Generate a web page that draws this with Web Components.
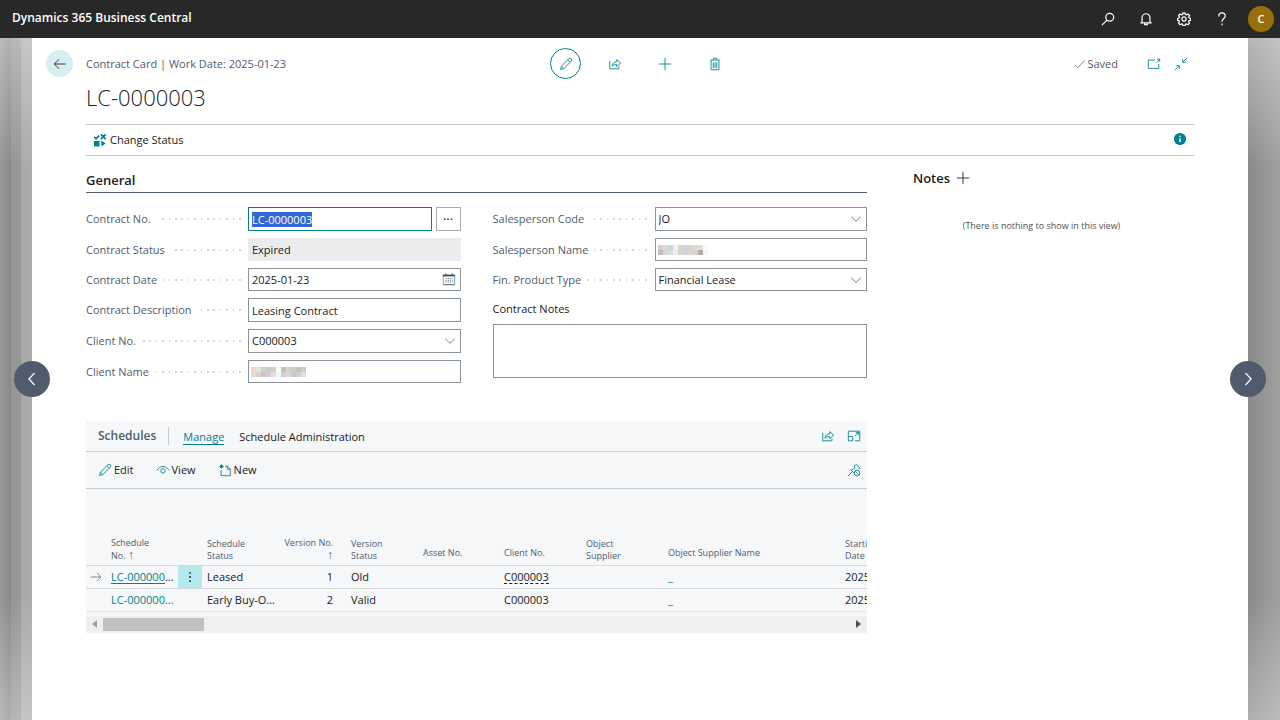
<!DOCTYPE html>
<html lang="en">
<head>
<meta charset="utf-8">
<meta name="viewport" content="width=device-width, initial-scale=1">
<title>LC-0000003 - Dynamics 365 Business Central</title>
<style>
html, body { margin: 0; }
body {
  --teal: #00828a; --ink: #212121; --muted: #505c6d; --line: #c8cbd0; --edge: #8b929e; --pane: #f5f7f9;
  font: 11px/16px "Open Sans", "Noto Sans", sans-serif; color: var(--ink);
}
</style>
</head>
<body>
<bc-app></bc-app>
<script>
const BASE = `
  *, *::before, *::after { box-sizing: border-box; }
  button, input, select, textarea { font: inherit; color: inherit; margin: 0; border-radius: 0; outline: 0; }
  button { background: none; border: 0; padding: 0; display: inline-flex; align-items: center; cursor: pointer; }
  h1, h2, p { margin: 0; }
  a { color: inherit; text-decoration: none; }
`;
function define(name, html, setup) {
  const template = document.createElement('template');
  template.innerHTML = html;
  customElements.define(name, class extends HTMLElement {
    connectedCallback() {
      if (this.shadowRoot) return;
      const root = this.attachShadow({ mode: 'open' });
      const base = document.createElement('style');
      base.textContent = BASE;
      root.append(base, template.content.cloneNode(true));
      if (setup) setup.call(this, root);
    }
  });
}

/* 16 x 16 line icons */
const ICONS = {
  search: '<circle cx="10" cy="6" r="4.5"/><path d="M7 9.300 1 15"/>',
  bell: '<path d="M3.500 12.500V6.500a4.500 4.500 0 0 1 9 0v6M1.500 12.500h13M6.500 13v1.500h3V13"/>',
  gear: '<circle cx="8" cy="8" r="2.400"/><path d="M6.800 1h2.400l.4 1.800 1.200.5 1.700-1 1.900 1.900-1 1.700.5 1 1.600.3v2.400l-1.800.4-.5 1.200 1 1.600-1.700 1.700-1.700-1-1.200.5-.4 1.600H6.800l-.4-1.600-1.200-.5-1.700 1-1.700-1.700 1-1.600-.5-1.200-1.600-.4V7.200l1.600-.3.500-1-1-1.700 1.700-1.900 1.700 1 1.200-.5z"/>',
  help: '<path d="M4.300 5V4.600a3.700 3.700 0 0 1 7.400 0C11.700 7.500 8 7.500 8 11M8 13v2"/>',
  back: '<path d="M1.500 8h13M7 2.500 1.500 8 7 13.500"/>',
  pencil: '<path d="m1.800 14.200 1-3.800 8.300-8.300a1.900 1.900 0 0 1 2.800 2.800l-8.300 8.300zM10 3.200 12.800 6M2.800 10.400l2.800 2.800"/>',
  share: '<path d="M2 4.500v9h10.500V11M4.500 10.500C5 7 7 5.500 10 5.500V3l4.500 4-4.500 4V8.500C7.500 8.500 6 9 4.500 10.500z"/>',
  plus: '<path d="M8 1v14M1 8h14"/>',
  trash: '<path d="M3.500 4v10.500h9V4M2.500 3.500h11M6 3V1.500h4V3M6 6v6.500M8 6v6.500M10 6v6.500"/>',
  check: '<path d="m1 9 4 4L14.500 3"/>',
  popout: '<path d="M9 3.500H1.500v9.500h12V8M10.500 6.500l4-4M11.500 2.500h3v3"/>',
  collapse: '<path d="m15 1-5 5M10 2.500V6h3.500M1 15l5-5M2.500 10H6v3.500"/>',
  info: '<circle cx="8" cy="8" r="7" fill="currentColor" stroke="none"/><path stroke="#fff" stroke-width="1.600" d="M8 7v4.500M8 4.200v1.500"/>',
  status: '<g fill="currentColor" stroke="none"><path d="M1 9h6.500v6.500H1zM9.500 8.500 14.500 12l-5 3.500z"/></g><path stroke-width="2" d="M1.500 4.500 3.500 6.500 7 3M9 1.500l5.500 5.500M14.500 1.500 9 7"/>',
  left: '<path stroke-width="1.500" d="M11 1 4.500 8l6.500 7"/>',
  right: '<path stroke-width="1.500" d="M5 1l6.500 7L5 15"/>',
  down: '<path d="m1.500 5 6.500 6 6.500-6"/>',
  calendar: '<path stroke="#b08a60" d="M1.500 3.500v11"/><path stroke="#3a4552" stroke-width="2" d="M1 4h14"/><path stroke="#3a4552" d="M4.500 1.500V4M11.500 1.500V4M1.500 14.500h13"/><path stroke="#6e7a87" stroke-dasharray="1.500 1" d="M4 7.500h8.500M4 9.500h8.500M4 11.500h8.500"/><path stroke="#4a97d8" d="M14.500 5v9.500"/>',
  eye: '<path d="M1 8.500c3.500-6 10.500-6 14 0"/><circle cx="8" cy="9" r="2.500"/>',
  newdoc: '<path d="M8 3.500h2.500l3.500 3.300v7.700H3.500V8M10.500 3.500v3.500H14M4 1.500v5M1.500 4h5M2.300 2.300l3.400 3.400M5.700 2.300 2.300 5.700"/>',
  expand: '<path d="M1.500 8V2.500h13v11H9M1.500 8.500h5v5h-5zM9 8l4-4M10 4h3v3"/>',
  unpin: '<path d="m1 15 5-5M4 7.500l4.500 4.500M5 8.200l4-2.500L8.500 3.500 10.500 1.500l4.500 4.500-1.500 1.500"/><circle cx="11.500" cy="11.500" r="3.200"/><path d="m9.500 9.500 4 4"/>',
  arrow: '<path d="M1 8h13.500M9 2.500l5.500 5.500L9 13.500"/>',
  dots: '<g fill="currentColor" stroke="none"><circle cx="8" cy="2.500" r="1.200"/><circle cx="8" cy="8" r="1.200"/><circle cx="8" cy="13.500" r="1.200"/></g>'
};
define('bc-icon', `
  <style>:host { display: inline-flex; flex: none; width: 14px; height: 14px; } svg { width: 100%; height: 100%; display: block; }</style>
  <svg viewBox="0 0 16 16" fill="none" stroke="currentColor" aria-hidden="true"></svg>`,
  function (root) { root.querySelector('svg').innerHTML = ICONS[this.getAttribute('name')] || ''; });

define('bc-topbar', `
  <style>
    :host { display: flex; align-items: center; justify-content: space-between; height: 38px; padding: 0 6px 0 12px; background: #282828; color: #fff; }
    a { font-size: 12px; font-weight: 600; padding-bottom: 3px; }
    nav { display: flex; align-items: center; gap: 24px; }
    bc-icon { width: 14px; height: 14px; stroke-width: 1.4px; }
    .avatar { width: 26px; height: 26px; border-radius: 13px; background: #986f0b; justify-content: center; font-weight: 600; margin-left: -5px; }
  </style>
  <a href="#">Dynamics 365 Business Central</a>
  <nav aria-label="Global">
    <button aria-label="Search"><bc-icon name="search"></bc-icon></button>
    <button aria-label="Notifications"><bc-icon name="bell"></bc-icon></button>
    <button aria-label="Settings"><bc-icon name="gear"></bc-icon></button>
    <button aria-label="Help"><bc-icon name="help"></bc-icon></button>
    <button class="avatar">C</button>
  </nav>`);

define('bc-page-head', `
  <style>
    :host { display: block; }
    .bar { display: grid; grid-template-columns: 1fr auto 1fr; align-items: center; height: 31px; color: var(--teal); }
    .crumb { display: flex; align-items: center; color: var(--muted); margin-left: -40px; gap: 13px; }
    .back { width: 27px; height: 27px; border-radius: 14px; background: #d7eff1; color: var(--ink); justify-content: center; }
    .cmds { display: flex; align-items: center; gap: 36px; padding-right: 8px; }
    .edit { width: 31px; height: 31px; border: 1px solid var(--teal); border-radius: 16px; justify-content: center; margin-right: -9px; }
    .state { display: flex; align-items: center; justify-content: flex-end; gap: 13px; padding-right: 6px; }
    .saved { display: flex; align-items: center; color: var(--muted); margin-right: 16px; gap: 1px; }
    .saved bc-icon { width: 12px; height: 12px; }
    h1 { font-size: 22px; line-height: 30px; font-weight: 300; padding: 3px 0 12px; }
  </style>
  <div class="bar">
    <div class="crumb"><button class="back" aria-label="Back"><bc-icon name="back"></bc-icon></button><span>Contract Card | Work Date: 2025-01-23</span></div>
    <div class="cmds">
      <button class="edit" aria-label="Edit"><bc-icon name="pencil"></bc-icon></button>
      <button aria-label="Share"><bc-icon name="share"></bc-icon></button>
      <button aria-label="New"><bc-icon name="plus"></bc-icon></button>
      <button aria-label="Delete"><bc-icon name="trash"></bc-icon></button>
    </div>
    <div class="state">
      <span class="saved"><bc-icon name="check"></bc-icon>Saved</span>
      <button aria-label="Open in new window"><bc-icon name="popout"></bc-icon></button>
      <button aria-label="Collapse"><bc-icon name="collapse"></bc-icon></button>
    </div>
  </div>
  <h1>LC-0000003</h1>`);

define('bc-action-bar', `
  <style>
    :host { display: flex; align-items: center; justify-content: space-between; height: 32px; border: solid var(--line); border-width: 1px 0; padding: 0 7px; }
    button { gap: 3px; }
    .info { color: var(--teal); padding-bottom: 3px; }
  </style>
  <button><bc-icon name="status" style="color: var(--teal)"></bc-icon>Change Status</button>
  <button class="info" aria-label="Details"><bc-icon name="info"></bc-icon></button>`);

const MOSAICS = {
  client: ['#ead8d2 #e3e6df #cccfcc #c9cdd0 #d2d0cd #fbfcfe #c3bfbd #d3d3d1 #cccdc8 #c5c6c2 #c5cdd7', '#edd9cf #d9d3cf #cac8cb #d0d0d2 #e9ddda #edf6fb #d7cfc9 #d9d7d0 #c7cad0 #cfd1cc #d9e2e8'],
  sales: ['#d5cfd1 #deded7 #cdd3d6 #f0efef #d5d5cf #d0d2d6 #d6d5d0 #dcd9d9 #dfdcdb #f5faff', '#c3babf #dfd5ce #d5e2e5 #e9ebeb #d4d6cf #ced1d8 #d7d5d2 #d4d1d0 #b4a9a7 #f1f8fd']
};
define('bc-field', `
  <style>
    :host { display: grid; grid-template-columns: 162px 1fr; height: 23px; }
    :host([tall]) { height: 24px; }
    :host([wide]) { display: block; height: auto; padding-top: 3px; }
    label { display: flex; align-items: center; color: var(--muted); gap: 6px; padding-right: 7px; white-space: nowrap; }
    label::after { content: ""; flex: 1; height: 2px; background: url("data:image/svg+xml,%3Csvg xmlns='http://www.w3.org/2000/svg' width='32' height='2' fill='%23d3d5d8'%3E%3Cpath d='M4 0h2v2H4zM11 0h1v2h-1zM17 0h2v2h-2zM24 0h1v2h-1zM30 0h2v2h-2z'/%3E%3C/svg%3E") right top repeat-x; }
    :host([wide]) label { color: var(--ink); line-height: 16px; padding-bottom: 7px; }
    :host([wide]) label::after { content: none; }
    .box { display: flex; position: relative; min-width: 0; gap: 4px; }
    input, select, textarea { flex: 1; min-width: 0; width: 100%; height: 100%; background: #fff; border: 1px solid var(--edge); padding: 0 3px; appearance: none; }
    textarea { display: block; height: 54px; resize: none; padding: 3px; }
    :host([focused]) input { border-color: var(--teal); }
    input:read-only { background: #ebeced; border-color: #ebeced; }
    ::selection { background: #3367d6; color: #fff; }
    .more { width: 25px; border: 1px solid #a9aeb5; justify-content: center; font-size: 13px; }
    .hint { position: absolute; right: 5px; top: 6px; color: var(--muted); pointer-events: none; width: 12px; height: 12px; }
    .hint[name=calendar] { width: 14px; height: 14px; top: 4px; }
    .mosaic { position: absolute; left: 3px; top: 7px; }
  </style>
  <label for="c"></label><div class="box"></div>`,
  function (root) {
    const kind = this.getAttribute('kind') || 'text', value = this.getAttribute('value') || '';
    root.querySelector('label').textContent = this.getAttribute('label');
    const box = root.querySelector('.box');
    const control = document.createElement(kind === 'select' ? 'select' : kind === 'area' ? 'textarea' : 'input');
    control.id = 'c';
    if (kind === 'select') control.add(new Option(value)); else control.value = value;
    if (kind === 'readonly') control.readOnly = true;
    box.append(control);
    const hint = { select: 'down', date: 'calendar' }[kind];
    if (hint) box.insertAdjacentHTML('beforeend', `<bc-icon class="hint" name="${hint}"></bc-icon>`);
    if (kind === 'lookup') box.insertAdjacentHTML('beforeend', '<button class="more" aria-label="Assist edit">···</button>');
    const mosaic = MOSAICS[this.getAttribute('mosaic')];
    if (mosaic) {
      const cells = mosaic.map((row, y) => row.split(' ').map((c, x) => `<rect x="${x * 5}" y="${y * 5}" width="5" height="5" fill="${c}"/>`).join('')).join('');
      box.insertAdjacentHTML('beforeend', `<svg class="mosaic" width="60" height="10" shape-rendering="crispEdges" aria-hidden="true">${cells}</svg>`);
    }
    if (this.hasAttribute('focused')) { control.focus(); control.select(); }
  });

define('bc-general', `
  <style>
    :host { display: block; }
    h2 { font-size: 13px; line-height: 20px; font-weight: 600; padding-bottom: 2px; border-bottom: 1px solid var(--muted); }
    .cols { display: grid; grid-template-columns: 1fr 1fr; gap: 32px; padding-top: 14px; }
    .col { display: flex; flex-direction: column; gap: 7px; }
  </style>
  <h2>General</h2>
  <div class="cols">
    <div class="col">
      <bc-field tall focused kind="lookup" label="Contract No." value="LC-0000003"></bc-field>
      <bc-field kind="readonly" label="Contract Status" value="Expired"></bc-field>
      <bc-field kind="date" label="Contract Date" value="2025-01-23"></bc-field>
      <bc-field tall label="Contract Description" value="Leasing Contract"></bc-field>
      <bc-field tall kind="select" label="Client No." value="C000003"></bc-field>
      <bc-field label="Client Name" mosaic="client"></bc-field>
    </div>
    <div class="col">
      <bc-field tall kind="select" label="Salesperson Code" value="JO"></bc-field>
      <bc-field label="Salesperson Name" mosaic="sales"></bc-field>
      <bc-field kind="select" label="Fin. Product Type" value="Financial Lease"></bc-field>
      <bc-field wide kind="area" label="Contract Notes"></bc-field>
    </div>
  </div>`);

define('bc-schedules', `
  <style>
    :host { display: block; background: var(--pane); overflow: hidden; }
    .head, .tools { display: flex; align-items: center; border-bottom: 1px solid var(--line); padding: 0 6px 0 12px; }
    .head { height: 31px; }
    .tools { height: 37px; gap: 22px; }
    h2 { font-size: 12px; line-height: 18px; font-weight: 600; color: var(--muted); padding-right: 12px; border-right: 1px solid var(--line); margin-right: 14px; }
    .tab { margin-right: 15px; border-bottom: 1px solid transparent; line-height: 15px; padding-top: 1px; }
    .tab.on { color: var(--teal); border-color: var(--teal); }
    .end { margin-left: auto; display: flex; gap: 12px; color: var(--teal); }
    .tools button { gap: 2px; }
    bc-icon { color: var(--teal); }
    table { table-layout: fixed; border-collapse: collapse; width: 840px; }
    .view { overflow: hidden; padding-bottom: 4px; }
    th { font-size: 9px; line-height: 12px; font-weight: 400; color: var(--muted); text-align: left; vertical-align: bottom; height: 76px; padding: 0 0 3px 5px; }
    th.one { padding-bottom: 6px; }
    th b { font-size: 12px; font-weight: 400; line-height: 11px; }
    td { height: 23px; line-height: 16px; padding: 0 0 0 5px; white-space: nowrap; }
    thead tr, tbody tr { border-bottom: 1px solid #d5d8dc; }
    tbody tr:last-child { border-color: #e4e6e9; }
    .num { text-align: right; padding-right: 13px; }
    td a { color: var(--teal); }
    .on td:nth-child(2) a { text-decoration: underline; text-underline-offset: 2px; }
    td.pick { background: #b2eaed; padding: 0; }
    .pick button { width: 24px; height: 22px; justify-content: center; }
    .pick bc-icon { color: var(--ink); width: 12px; height: 12px; }
    .mark { padding-left: 4px; }
    .mark bc-icon { display: flex; width: 12px; height: 12px; color: #666; }
    .on .client { border-bottom: 1px dashed var(--ink); display: inline-block; line-height: 12px; }
    .scroll { display: flex; align-items: center; justify-content: space-between; height: 17px; padding: 0 6px; background: #f0f0f0; }
    .thumb { width: 101px; height: 13px; background: #c1c1c1; margin: 0 auto 0 6px; }
    .scroll svg { width: 5px; height: 8px; fill: #505050; }
  </style>
  <div class="head">
    <h2>Schedules</h2>
    <a class="tab on" href="#">Manage</a><a class="tab" href="#">Schedule Administration</a>
    <div class="end"><button aria-label="Share"><bc-icon name="share"></bc-icon></button><button aria-label="Expand"><bc-icon name="expand"></bc-icon></button></div>
  </div>
  <div class="tools">
    <button><bc-icon name="pencil"></bc-icon>Edit</button>
    <button><bc-icon name="eye"></bc-icon>View</button>
    <button><bc-icon name="newdoc"></bc-icon>New</button>
    <div class="end"><button aria-label="Unpin"><bc-icon name="unpin"></bc-icon></button></div>
  </div>
  <div class="view">
    <table>
      <colgroup><col style="width:20px"><col style="width:72px"><col style="width:24px"><col style="width:77px"><col style="width:67px"><col style="width:72px"><col style="width:81px"><col style="width:82px"><col style="width:82px"><col style="width:177px"><col></colgroup>
      <thead><tr>
        <th></th><th>Schedule<br>No. <b>↑</b></th><th></th><th>Schedule<br>Status</th><th class="num">Version No.<br><b>↑</b></th><th>Version<br>Status</th>
        <th class="one">Asset No.</th><th class="one">Client No.</th><th>Object<br>Supplier</th><th class="one">Object Supplier Name</th><th>Starting<br>Date</th>
      </tr></thead>
      <tbody>
        <tr class="on"><td class="mark"><bc-icon name="arrow"></bc-icon></td><td><a href="#">LC-000000</a>...</td><td class="pick"><button aria-label="More options"><bc-icon name="dots"></bc-icon></button></td><td>Leased</td><td class="num">1</td><td>Old</td><td></td><td><span class="client">C000003</span></td><td></td><td><a href="#">_</a></td><td>2025-01-23</td></tr>
        <tr><td></td><td><a href="#">LC-000000...</a></td><td></td><td>Early Buy-O...</td><td class="num">2</td><td>Valid</td><td></td><td><span class="client">C000003</span></td><td></td><td><a href="#">_</a></td><td>2025-01-23</td></tr>
      </tbody>
    </table>
  </div>
  <div class="scroll"><svg viewBox="0 0 5 8" style="fill:#a0a0a0"><path d="M5 0v8L0 4z"/></svg><div class="thumb"></div><svg viewBox="0 0 5 8"><path d="M0 0v8l5-4z"/></svg></div>`);

define('bc-notes', `
  <style>
    :host { display: block; }
    header { display: flex; align-items: center; gap: 6px; height: 16px; }
    h2 { font-size: 13px; line-height: 16px; font-weight: 600; }
    p { font-size: 9px; line-height: 12px; text-align: center; color: #505050; padding: 34px 24px 0 0; }
  </style>
  <header><h2>Notes</h2><button aria-label="Add note"><bc-icon name="plus"></bc-icon></button></header>
  <p>(There is nothing to show in this view)</p>`);

define('bc-app', `
  <style>
    :host { display: flex; flex-direction: column; min-height: 100vh; }
    .stage { flex: 1; display: grid; grid-template-columns: 32px minmax(0, 1fr) 32px; position: relative; }
    .left { background:
      linear-gradient(90deg, transparent 11px, #ffffff1a 11px 21px, #ffffff40 21px),
      linear-gradient(#ffffff55, transparent 130px, transparent 560px, #ffffff50),
      linear-gradient(90deg, #999, #898989 11px, #909090 32px); }
    .right { background:
      linear-gradient(#ffffff60, transparent 130px, transparent 560px, #ffffff50),
      linear-gradient(90deg, #8a8a8a, #a0a0a0); }
    .sheet { background: #fff; padding: 10px 54px 32px; }
    .body { display: grid; grid-template-columns: minmax(0, 1fr) 281px; gap: 46px; padding-top: 14px; align-items: start; }
    main { display: grid; gap: 38px; }
    .nav { position: absolute; top: 50%; margin-top: -18px; width: 36px; height: 36px; border-radius: 18px; background: #505c6d; color: #fff; justify-content: center; }
    .prev { left: 14px; } .next { right: 14px; }
  </style>
  <bc-topbar></bc-topbar>
  <div class="stage">
    <div class="left"></div>
    <div class="sheet">
      <bc-page-head></bc-page-head>
      <bc-action-bar></bc-action-bar>
      <div class="body">
        <main><bc-general></bc-general><bc-schedules></bc-schedules></main>
        <bc-notes></bc-notes>
      </div>
    </div>
    <div class="right"></div>
    <button class="nav prev" aria-label="Previous record"><bc-icon name="left"></bc-icon></button>
    <button class="nav next" aria-label="Next record"><bc-icon name="right"></bc-icon></button>
  </div>`);
</script>
</body>
</html>
